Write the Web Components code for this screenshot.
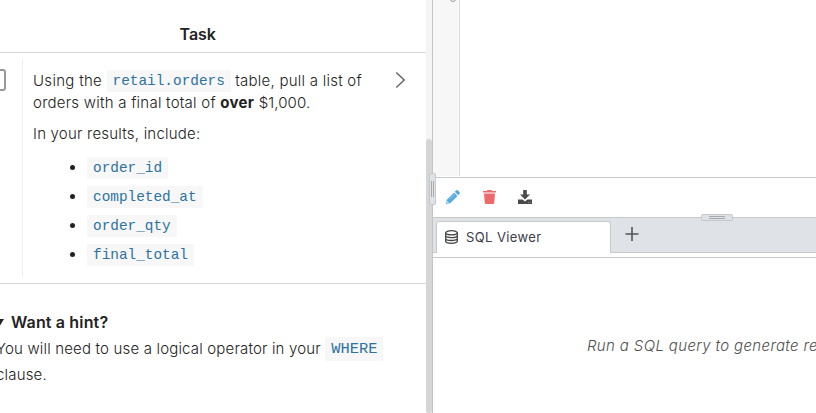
<!DOCTYPE html>
<html lang="en">
<head>
<meta charset="utf-8">
<title>SQL Task</title>
<style>
  body {
    margin: 0;
    height: 413px;
    overflow: hidden;
    background: #fff;
    color: #222;
    font-family: Inter, "Liberation Sans", sans-serif;
    font-size: 15px;
  }
</style>
</head>
<body>
<sql-workspace>
  <task-panel slot="task" heading="Task">
    <task-card>
      <p class="intro">
        <span class="lead">Using the</span> <code-chip>retail.orders</code-chip> <span>table, pull a list of</span><br>
        <span>orders with a final total of</span> <b>over</b> <span class="amount">$1,000.</span>
      </p>
      <p>In your results, include:</p>
      <ul>
        <li><code-chip>order_id</code-chip></li>
        <li><code-chip>completed_at</code-chip></li>
        <li><code-chip>order_qty</code-chip></li>
        <li><code-chip>final_total</code-chip></li>
      </ul>
    </task-card>
    <hint-box summary="Want a hint?">
      <span>You will need to use a logical operator in your</span> <code-chip large>WHERE</code-chip><br>clause.
    </hint-box>
  </task-panel>
  <split-bar slot="split"></split-bar>
  <editor-panel slot="editor"></editor-panel>
</sql-workspace>

<style>
  /* slotted light-DOM content of the task card */
  task-card p { margin: 0 0 9px; line-height: 22px; white-space: nowrap; letter-spacing: .24px; }
  task-card p + p { margin-bottom: 12px; letter-spacing: .21px; }
  task-card ul { margin: 0; padding: 0 0 0 54px; }
  task-card li { height: 22px; line-height: 22px; margin-bottom: 7px; }
  task-card b { font-weight: 700; letter-spacing: .3px; }
  task-card .lead { letter-spacing: .3px; }
  task-card .amount { letter-spacing: .1px; }
</style>

<script>
class SqlWorkspace extends HTMLElement {
  connectedCallback() {
    this.attachShadow({ mode: 'open' });
    this.shadowRoot.innerHTML = `
      <style>
        :host { display: grid; grid-template-columns: 426px 7px 1fr; height: 413px; overflow: hidden; }
      </style>
      <slot name="task"></slot>
      <slot name="split"></slot>
      <slot name="editor"></slot>
    `;
  }
}

class TaskPanel extends HTMLElement {
  connectedCallback() {
    this.attachShadow({ mode: 'open' });
    this.shadowRoot.innerHTML = `
      <style>
        :host { display: block; overflow: hidden; font-weight: 350; }
        h2 {
          box-sizing: border-box;
          height: 53px;
          margin: 0;
          padding: 16px 0 0 179.5px;
          border-bottom: 1px solid #d6d6d6;
          font-size: 16px;
          line-height: 36px;
          font-weight: 600;
        }
      </style>
      <h2>${this.getAttribute('heading')}</h2>
      <slot></slot>
    `;
  }
}

class TaskCard extends HTMLElement {
  connectedCallback() {
    this.attachShadow({ mode: 'open' });
    this.shadowRoot.innerHTML = `
      <style>
        :host {
          box-sizing: border-box;
          display: flex;
          height: 231px;
          padding: 7px 0;
          border-bottom: 1px solid #d6d6d6;
        }
        .check { width: 22px; padding-top: 9px; box-sizing: border-box; }
        .box {
          box-sizing: border-box;
          width: 22px;
          height: 22px;
          margin-left: -16px;
          border: 2px solid #999;
          border-radius: 3px;
        }
        .body { flex: 1; border-left: 1px solid #eee; padding: 10px 0 0 10px; }
        svg { margin: 11px 20px 0 0; flex: none; }
      </style>
      <div class="check"><div class="box"></div></div>
      <div class="body"><slot></slot></div>
      <svg width="12" height="18" viewBox="0 0 12 18" fill="none" stroke="#666" stroke-width="1.5"><path d="M2.3 1.5 10.2 9l-7.9 7.5"/></svg>
    `;
  }
}

class CodeChip extends HTMLElement {
  connectedCallback() {
    this.attachShadow({ mode: 'open' });
    this.shadowRoot.innerHTML = `
      <style>
        :host {
          display: inline-block;
          height: 22px;
          padding: 0 6px;
          background: #f7f7f7;
          color: #2d72a2;
          font: 14.4px/22px "Liberation Mono", monospace;
          letter-spacing: 0;
          vertical-align: top;
        }
        :host([large]) { height: 24px; margin-top: 1px; font-size: 15.4px; line-height: 24px; }
      </style>
      <slot></slot>
    `;
  }
}

class HintBox extends HTMLElement {
  connectedCallback() {
    this.attachShadow({ mode: 'open' });
    this.shadowRoot.innerHTML = `
      <style>
        :host { display: block; padding-top: 25px; white-space: nowrap; }
        .summary {
          display: flex;
          align-items: center;
          gap: 7px;
          height: 26px;
          margin-bottom: 1px;
          margin-left: -6px;
          font-size: 16px;
          font-weight: 600;
          letter-spacing: .15px;
        }
        .content { margin-left: -4px; line-height: 26px; letter-spacing: .17px; }
      </style>
      <div class="summary">
        <svg width="10" height="9" viewBox="0 0 10 9"><path d="M0 1h10L5 9z" fill="#222"/></svg>
        <span>${this.getAttribute('summary')}</span>
      </div>
      <div class="content"><slot></slot></div>
    `;
  }
}

class SplitBar extends HTMLElement {
  connectedCallback() {
    this.attachShadow({ mode: 'open' });
    this.shadowRoot.innerHTML = `
      <style>
        :host {
          position: relative;
          z-index: 2;
          box-sizing: border-box;
          display: block;
          padding-top: 139px;
          background: #f4f4f4;
          border-right: 1px solid #c4c4c4;
        }
        .thumb { height: 274px; background: #d6d6d6; border-radius: 3px; }
        /* grip lies over both panes */
        .grip {
          position: absolute;
          left: 3px;
          top: 173px;
          box-sizing: border-box;
          width: 7px;
          height: 32px;
          background: #dfe2e7;
          border: 1px solid #c8c8c8;
          border-radius: 2px;
          display: flex;
          justify-content: center;
          align-items: center;
          gap: 1px;
        }
        .grip i { width: 1px; height: 16px; background: #aaa; }
      </style>
      <div class="thumb"></div>
      <div class="grip"><i></i><i></i></div>
    `;
  }
}

class EditorPanel extends HTMLElement {
  connectedCallback() {
    this.attachShadow({ mode: 'open' });
    this.shadowRoot.innerHTML = `
      <style>
        :host { display: flex; flex-direction: column; overflow: hidden; }
        .editor { height: 176px; flex: none; }
        .gutter {
          box-sizing: border-box;
          width: 27px;
          height: 176px;
          background: #f7f7f7;
          border-right: 1px solid #ddd;
          overflow: hidden;
        }
        .line { width: 6px; height: 7px; margin: -5px 0 0 17px; box-sizing: border-box; border: 1px solid #999; border-radius: 3px; }
        .empty {
          flex: 1;
          padding: 75px 0 0 154px;
          white-space: nowrap;
          font-style: italic;
          font-weight: 350;
          line-height: 26px;
          letter-spacing: .36px;
          color: #505050;
        }
      </style>
      <div class="editor"><div class="gutter"><div class="line"></div></div></div>
      <query-toolbar></query-toolbar>
      <result-tabs>SQL Viewer</result-tabs>
      <div class="empty">Run a SQL query to generate results</div>
    `;
  }
}

class QueryToolbar extends HTMLElement {
  connectedCallback() {
    this.attachShadow({ mode: 'open' });
    this.shadowRoot.innerHTML = `
      <style>
        :host {
          box-sizing: border-box;
          display: flex;
          height: 41px;
          margin-top: 1px;
          padding: 12px 0 0 13px;
          border-top: 1px solid #c8c8c8;
          flex: none;
        }
        svg { display: block; }
        .trash { margin-left: 23px; }
        .download { margin-left: 22px; }
      </style>
      <svg width="14" height="14" viewBox="0 0 14 14">
        <path fill="#57aadd" d="M0 14l.8-4.2L8.1 2.5l3.4 3.4-7.3 7.3zM8.8 1.8 10 .6c.7-.7 1.5-.7 2.1 0l1.3 1.3c.7.7.7 1.4 0 2.1l-1.2 1.2z"/>
        <path d="M1.2 11.4l1.4 1.4-1.2.3-.5-.5zM3.6 9l4.6-4.6" stroke="#cae6f5" stroke-width=".6" fill="#d8edf7"/>
      </svg>
      <svg class="trash" width="13" height="14" viewBox="0 0 13 14" fill="#ee6969">
        <path d="M0 1h3.8l.7-1h4l.7 1H13v1.6H0zM1 3.5h11l-.8 9.4c-.1.7-.5 1.1-1.2 1.1H3c-.7 0-1.1-.4-1.2-1.1z"/>
      </svg>
      <svg class="download" width="14" height="14" viewBox="0 0 14 14" fill="#4a4a4a">
        <path d="M5.2 0h3.6v4.6h3.2L7 9.5 2 4.6h3.2zM0 9.6h4.6L7 11.6l2.4-2H14V14H0z"/>
        <path d="M10.2 12.2h.7v.6h-.7zM12 12.2h.7v.6H12z" fill="#fff"/>
      </svg>
    `;
  }
}

class ResultTabs extends HTMLElement {
  connectedCallback() {
    this.attachShadow({ mode: 'open' });
    this.shadowRoot.innerHTML = `
      <style>
        :host { position: relative; display: block; flex: none; margin-top: -1px; border-bottom: 1px solid #c8c8c8; }
        .strip {
          box-sizing: border-box;
          display: flex;
          height: 36px;
          margin-bottom: 4px;
          padding: 3px 0 0 3px;
          background: #dfe2e7;
          border-top: 1px solid #c8c8c8;
          border-bottom: 1px solid #c8c8c8;
        }
        .tab {
          box-sizing: border-box;
          display: flex;
          align-items: center;
          gap: 8px;
          width: 175px;
          height: 32px;
          padding: 0 0 2px 8px;
          background: #fff;
          border: 1px solid #c8c8c8;
          border-bottom: 0;
          border-radius: 3px 3px 0 0;
          font-size: 13px;
          letter-spacing: .4px;
          color: #3c3c4c;
        }
        .plus { margin: 6px 0 0 13.5px; }
        /* drag handle sits on the pane boundary */
        .grip {
          position: absolute;
          left: 268px;
          top: -3px;
          box-sizing: border-box;
          width: 32px;
          height: 7px;
          background: #dfe2e7;
          border: 1px solid #c8c8c8;
          border-radius: 2px;
          display: flex;
          flex-direction: column;
          align-items: center;
          justify-content: center;
          gap: 1px;
        }
        .grip i { width: 16px; height: 1px; background: #aaa; }
      </style>
      <div class="strip">
        <div class="tab">
          <svg width="13" height="14" viewBox="0 0 13 14" fill="none" stroke="#444" stroke-width="1.3">
            <ellipse cx="6.5" cy="2.8" rx="5.8" ry="2.1"/>
            <path d="M.7 2.8v8.4c0 1.2 2.6 2.1 5.8 2.1s5.8-.9 5.8-2.1V2.8M.7 5.6c0 1.2 2.6 2.1 5.8 2.1s5.8-.9 5.8-2.1M.7 8.4c0 1.2 2.6 2.1 5.8 2.1s5.8-.9 5.8-2.1"/>
          </svg>
          <span><slot></slot></span>
        </div>
        <svg class="plus" width="14" height="14" viewBox="0 0 14 14" stroke="#555" stroke-width="1.6"><path d="M.5 7h13M7 0v14"/></svg>
      </div>
      <div class="grip"><i></i><i></i></div>
    `;
  }
}

customElements.define('sql-workspace', SqlWorkspace);
customElements.define('task-panel', TaskPanel);
customElements.define('task-card', TaskCard);
customElements.define('code-chip', CodeChip);
customElements.define('hint-box', HintBox);
customElements.define('split-bar', SplitBar);
customElements.define('query-toolbar', QueryToolbar);
customElements.define('result-tabs', ResultTabs);
customElements.define('editor-panel', EditorPanel);
</script>
</body>
</html>
